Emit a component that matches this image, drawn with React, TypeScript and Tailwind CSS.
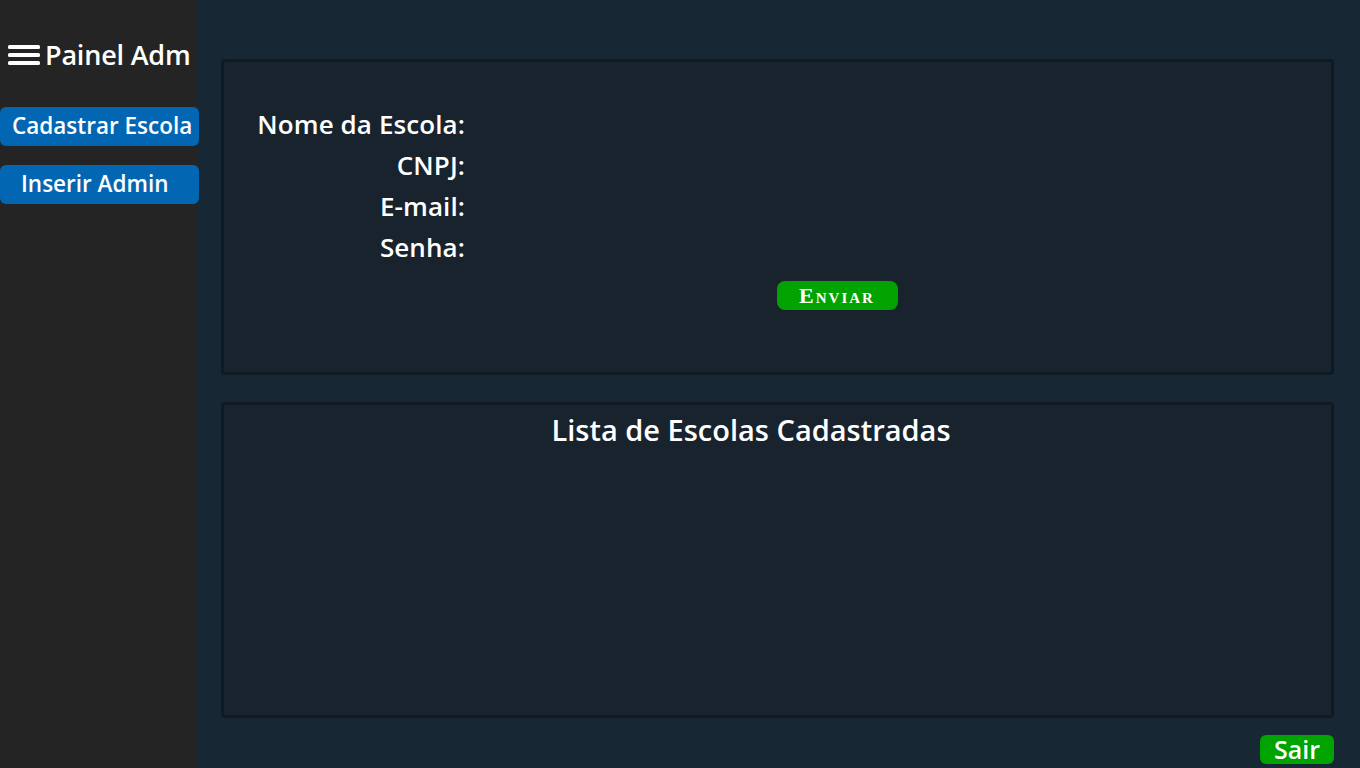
const font = "font-['Open_Sans','DejaVu_Sans',sans-serif]"

function Field({ label }: { label: string }) {
  return (
    <div className="flex h-[41px] items-center">
      <label className="w-[241px] text-right text-[26px] font-semibold leading-none tracking-[0.1px] text-white">{label}</label>
      <div className="ml-3 flex-1" />
    </div>
  )
}

export default function App() {
  return (
    <div className={`flex h-[768px] w-[1360px] overflow-hidden bg-[#172733] ${font}`}>
      {/* sidebar */}
      <aside className="w-[197px] shrink-0 bg-[#242424] pt-[41px]">
        <div className="flex items-center gap-[5px] pl-[8px]">
          <svg width="32" height="22" viewBox="0 0 32 22">
            <rect x="0" y="1" width="32" height="4" rx="1.5" fill="#fff" />
            <rect x="0" y="9" width="32" height="4" rx="1.5" fill="#fff" />
            <rect x="0" y="17" width="32" height="4" rx="1.5" fill="#fff" />
          </svg>
          <span className="text-[27px] font-semibold leading-none tracking-[-0.2px] text-white">Painel Adm</span>
        </div>
        <div className="mt-[39px] flex flex-col gap-[19px]">
          <button className="h-[39px] w-[199px] rounded-[6px] bg-[#0366b3] pl-[12px] text-left text-[22.5px] font-semibold leading-none text-white">
            Cadastrar Escola
          </button>
          <button className="h-[39px] w-[199px] rounded-[6px] bg-[#0366b3] pl-[21px] text-left text-[22.5px] font-semibold leading-none text-white">
            Inserir Admin
          </button>
        </div>
      </aside>

      {/* main */}
      <main className="flex flex-1 flex-col pl-[24px] pr-[26px] pt-[59px]">
        <section className="h-[316px] rounded-[4px] border-[3px] border-[#0f1a22] bg-[#18232e] pt-[41px]">
          <div className="flex flex-col">
            <Field label="Nome da Escola:" />
            <Field label="CNPJ:" />
            <Field label="E-mail:" />
            <Field label="Senha:" />
          </div>
          <div className="mt-[14px] flex justify-center pl-[119px]">
            <button className="h-[29px] w-[121px] rounded-[8px] bg-[#00a300] font-['Liberation_Serif',serif] text-[22px] font-semibold leading-none tracking-[2px] text-white [font-variant:small-caps]">
              Enviar
            </button>
          </div>
        </section>

        <section className="mt-[27px] h-[316px] rounded-[4px] border-[3px] border-[#0f1a22] bg-[#18232e] pr-[53px] pt-[7px]">
          <h2 className="text-center text-[29px] font-semibold leading-[36px] text-white">Lista de Escolas Cadastradas</h2>
        </section>

        <div className="mt-[17px] flex justify-end">
          <button className="h-[29px] w-[74px] rounded-[6px] bg-[#00a300] text-[25px] font-semibold leading-none text-white">
            Sair
          </button>
        </div>
      </main>
    </div>
  )
}
